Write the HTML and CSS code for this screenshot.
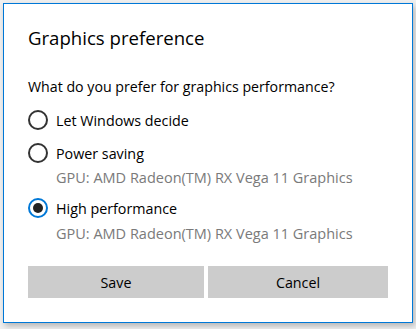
FILE: index.html
```html
<!DOCTYPE html>
<html>
<head>
<meta charset="utf-8">
<link rel="stylesheet" href="styles.css">
</head>
<body>
<div class="backdrop">
  <div class="dialog">
    <h1 class="title">Graphics preference</h1>
    <p class="question">What do you prefer for graphics performance?</p>
    <div class="option opt-first">
      <span class="radio"></span>
      <span class="label">Let Windows decide</span>
    </div>
    <div class="option opt-second">
      <span class="radio"></span>
      <span class="label">Power saving</span>
    </div>
    <div class="gpu gpu-first">GPU: AMD Radeon(TM) RX Vega 11 Graphics</div>
    <div class="option opt-third">
      <span class="radio checked"></span>
      <span class="label">High performance</span>
    </div>
    <div class="gpu gpu-second">GPU: AMD Radeon(TM) RX Vega 11 Graphics</div>
    <div class="buttons">
      <button class="btn btn-save">Save</button>
      <button class="btn btn-cancel">Cancel</button>
    </div>
  </div>
</div>
</body>
</html>
```

FILE: styles.css
```css
html, body {
  margin: 0;
  padding: 0;
  width: 416px;
  height: 329px;
  overflow: hidden;
  background: #f0f0f0;
  font-family: "Open Sans", "Noto Sans", sans-serif;
  color: #000;
}
.backdrop {
  padding: 3px 0 0 3px;
}
.dialog {
  box-sizing: border-box;
  width: 410px;
  height: 320px;
  background: #fff;
  border: 1px solid #0078d7;
  box-shadow: 2px 3px 6px rgba(0,0,0,0.25);
  padding: 20px 24px 0 24px;
  display: flex;
  flex-direction: column;
}
.title {
  margin: 0;
  font-size: 18.6px;
  font-weight: 400;
  line-height: 28px;
  height: 28px;
}
.question {
  margin: 25px 0 0 0;
  font-size: 14.2px;
  line-height: 20px;
  height: 20px;
}
.option {
  display: flex;
  align-items: center;
  gap: 8px;
  height: 20px;
  font-size: 14.3px;
}
.opt-first { margin-top: 13px; }
.opt-second { margin-top: 13px; }
.opt-third { margin-top: 10px; }
.radio {
  box-sizing: border-box;
  width: 20px;
  height: 20px;
  border-radius: 50%;
  border: 2px solid #333;
  display: flex;
  align-items: center;
  justify-content: center;
  flex: none;
}
.radio.checked {
  border-color: #0078d7;
}
.radio.checked::after {
  content: "";
  width: 10px;
  height: 10px;
  border-radius: 50%;
  background: #222;
}
.gpu {
  padding-left: 28px;
  font-size: 14.5px;
  line-height: 20px;
  height: 20px;
  color: #7a7a7a;
}
.gpu-first { margin-top: 5px; }
.gpu-second { margin-top: 6px; }
.buttons {
  margin-top: 22px;
  display: grid;
  grid-template-columns: 176px 180px;
  gap: 4px;
}
.btn {
  height: 32px;
  border: none;
  background: #cccccc;
  font-family: inherit;
  font-size: 14.3px;
  color: #000;
  padding: 0;
}
```
